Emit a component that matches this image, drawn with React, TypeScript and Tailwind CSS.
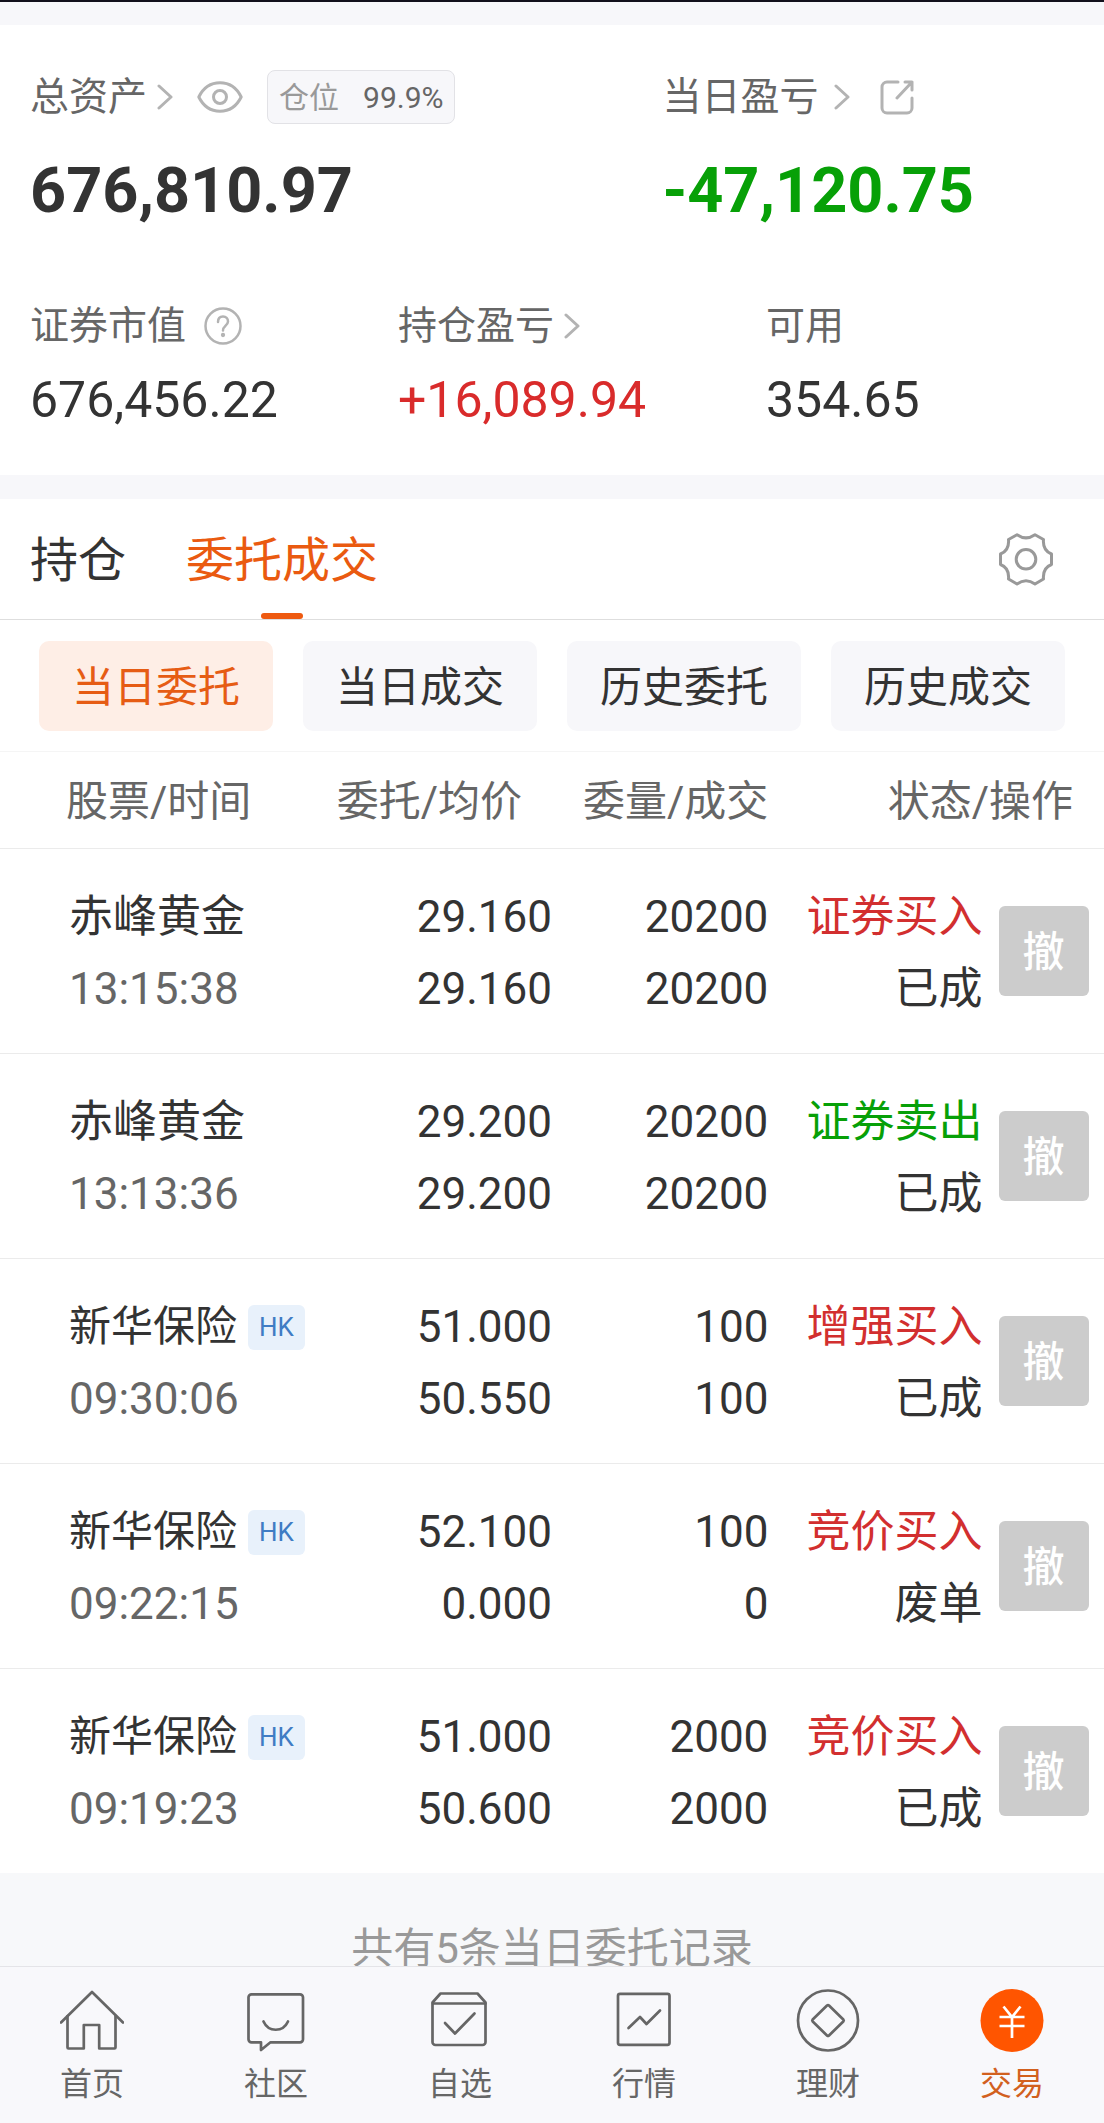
import { useState } from "react";
import type { ReactNode } from "react";
import clsx from "clsx";

type Order = {
  name: string;
  hk?: boolean;
  time: string;
  price: string;
  average: string;
  amount: string;
  filled: string;
  type: string;
  side: "buy" | "sell";
  status: string;
};

const orders: Order[] = [
  {
    name: "赤峰黄金",
    time: "13:15:38",
    price: "29.160",
    average: "29.160",
    amount: "20200",
    filled: "20200",
    type: "证券买入",
    side: "buy",
    status: "已成",
  },
  {
    name: "赤峰黄金",
    time: "13:13:36",
    price: "29.200",
    average: "29.200",
    amount: "20200",
    filled: "20200",
    type: "证券卖出",
    side: "sell",
    status: "已成",
  },
  {
    name: "新华保险",
    hk: true,
    time: "09:30:06",
    price: "51.000",
    average: "50.550",
    amount: "100",
    filled: "100",
    type: "增强买入",
    side: "buy",
    status: "已成",
  },
  {
    name: "新华保险",
    hk: true,
    time: "09:22:15",
    price: "52.100",
    average: "0.000",
    amount: "100",
    filled: "0",
    type: "竞价买入",
    side: "buy",
    status: "废单",
  },
  {
    name: "新华保险",
    hk: true,
    time: "09:19:23",
    price: "51.000",
    average: "50.600",
    amount: "2000",
    filled: "2000",
    type: "竞价买入",
    side: "buy",
    status: "已成",
  },
];

const filters = ["当日委托", "当日成交", "历史委托", "历史成交"];

function Chevron() {
  return (
    <svg width="16" height="26" viewBox="0 0 16 26" fill="none" stroke="#b3b3b3" strokeWidth="3" strokeLinecap="round" strokeLinejoin="round">
      <path d="M2 2l12 11L2 24" />
    </svg>
  );
}

function EyeIcon() {
  return (
    <svg width="46" height="32" viewBox="0 0 46 32" fill="none" stroke="#b3b3b3" strokeWidth="3" strokeLinejoin="round">
      <path d="M1.8 16C6 7.500 13.500 1.800 23 1.800S40 7.500 44.200 16C40 24.500 32.500 30.200 23 30.200S6 24.500 1.800 16z" />
      <circle cx="23" cy="16" r="6.500" />
    </svg>
  );
}

function ShareIcon() {
  return (
    <svg width="34" height="35" viewBox="0 0 34 35" fill="none" stroke="#b3b3b3" strokeWidth="3" strokeLinecap="round" strokeLinejoin="round">
      <path d="M18 2H7a5 5 0 0 0-5 5v21a5 5 0 0 0 5 5h20a5 5 0 0 0 5-5V18" />
      <path d="M25 2h7v8M32 2L17 18" />
    </svg>
  );
}

function HelpIcon() {
  return (
    <svg width="38" height="40" viewBox="0 0 38 40" fill="none" stroke="#b3b3b3" strokeWidth="2.500" strokeLinecap="round">
      <circle cx="19" cy="20" r="17.500" />
      <path d="M14 16c0-3.500 2-5.500 5-5.500s5 2 5 5c0 4-5 4.500-5 9" />
      <circle cx="19" cy="29" r="0.900" fill="#b3b3b3" />
    </svg>
  );
}

function GearIcon() {
  return (
    <svg width="54" height="53" viewBox="0 0 54 53" fill="none" stroke="#999" strokeWidth="3" strokeLinejoin="round">
      <path d="M18 1.800Q27 8 36 1.800L44.500 6.500Q43.500 17.500 52.500 21V31.500Q43.500 35 44.500 46L36 51Q27 44.500 18 51L9.500 46Q10.500 35 1.500 31.500V21Q10.500 17.500 9.500 6.500Z" />
      <circle cx="27" cy="26.300" r="9.800" />
    </svg>
  );
}

function NavIcon({ children }: { children: ReactNode }) {
  return (
    <svg width="64" height="64" viewBox="0 0 64 64" fill="none" stroke="#666" strokeWidth="2.700" strokeLinecap="round" strokeLinejoin="round">
      {children}
    </svg>
  );
}

const navItems = [
  {
    label: "首页",
    icon: (
      <NavIcon>
        <path d="M1 33.500L32 3l31 30.500" />
        <path d="M7.500 27v31.500a1 1 0 0 0 1 1h15.300V36h15.400v23.500h15.300a1 1 0 0 0 1-1V27" />
      </NavIcon>
    ),
  },
  {
    label: "社区",
    icon: (
      <NavIcon>
        <path d="M7.500 5.300h48.500a3 3 0 0 1 3 3v42a3 3 0 0 1-3 3H26.500L17 61v-7.700H7.500a3 3 0 0 1-3-3v-42a3 3 0 0 1 3-3z" />
        <path d="M19.500 32.500c5 11 19.500 11 24.500 0" />
      </NavIcon>
    ),
  },
  {
    label: "自选",
    icon: (
      <NavIcon>
        <path d="M12.500 4.500h37l8 9v39.500a3 3 0 0 1-3 3h-47a3 3 0 0 1-3-3V13.500z" />
        <path d="M5 14.500h52.500M17 34l10 10.500 19.500-20" />
      </NavIcon>
    ),
  },
  {
    label: "行情",
    icon: (
      <NavIcon>
        <rect x="6" y="4.800" width="51.500" height="51" rx="2" />
        <path d="M16.500 39L28 28l6.500 7L48 21.500" />
      </NavIcon>
    ),
  },
  {
    label: "理财",
    icon: (
      <NavIcon>
        <circle cx="32" cy="31.500" r="30" />
        <path d="M31 16.500L16.700 30.500a1.500 1.500 0 0 0 0 2L31 46.500a1.500 1.500 0 0 0 2 0L47.300 32.500a1.500 1.500 0 0 0 0-2L33 16.500a1.500 1.500 0 0 0-2 0z" />
      </NavIcon>
    ),
  },
  {
    label: "交易",
    active: true,
    icon: (
      <svg width="64" height="64" viewBox="0 0 64 64" fill="none" stroke="#fff" strokeWidth="2.700">
        <circle cx="32" cy="31.500" r="31.500" fill="#ff5500" stroke="none" />
        <path d="M23.500 17.500L32 28l8.500-10.500M32 28v21M19.500 28h25M19.500 37h25" />
      </svg>
    ),
  },
];

function Summary() {
  return (
    <section className="bg-white pt-[45px] pb-[45px] text-[#666]">
      <div className="flex">
        <div className="w-3/5 pl-[30px]">
          <div className="flex h-[54px] items-center">
            <a href="#assets" className="flex items-center gap-[10px] text-[39px] leading-[54px]">
              总资产
              <Chevron />
            </a>
            <button type="button" aria-label="隐藏金额" className="ml-6">
              <EyeIcon />
            </button>
            <div className="ml-6 flex h-[54px] items-center gap-6 rounded-[8px] border border-[#e2e2e6] bg-[#f7f7fa] px-[11px] text-[30px]">
              <span className="text-[#999]">仓位</span>
              <span>99.9%</span>
            </div>
          </div>
          <p className="mt-[35px] text-[63px] leading-[64px] font-bold text-[#333]">676,810.97</p>
        </div>
        <div className="w-2/5">
          <div className="flex h-[54px] items-center">
            <a href="#today" className="flex items-center gap-4 text-[39px] leading-[54px]">
              当日盈亏
              <Chevron />
            </a>
            <button type="button" aria-label="分享" className="ml-[30px]">
              <ShareIcon />
            </button>
          </div>
          <p className="mt-[35px] text-[63px] leading-[64px] font-bold text-[#07a007]">-47,120.75</p>
        </div>
      </div>
      <div className="mt-[83px] grid grid-cols-3 text-[39px] leading-[40px]">
        <div className="pl-[30px]">
          <div className="flex items-center gap-[18px]">
            证券市值
            <HelpIcon />
          </div>
          <p className="mt-6 text-[50px] leading-[60px] text-[#333]">676,456.22</p>
        </div>
        <div className="pl-[30px]">
          <a href="#position" className="flex items-center gap-[10px]">
            持仓盈亏
            <Chevron />
          </a>
          <p className="mt-6 text-[50px] leading-[60px] text-[#d92b2b]">+16,089.94</p>
        </div>
        <div className="pl-[30px]">
          <div>可用</div>
          <p className="mt-6 text-[50px] leading-[60px] text-[#333]">354.65</p>
        </div>
      </div>
    </section>
  );
}

function OrderRow({ order, last }: { order: Order; last: boolean }) {
  const line = !last && "border-b border-[#ebebeb]";
  const cell = clsx("pt-8 pb-7", line);
  return (
    <tr>
      <td className={clsx(cell, "pl-[69px]")}>
        <div className="flex h-[72px] items-center gap-[11px] whitespace-nowrap">
          <span className={order.hk ? "text-[42px]" : "text-[44px]"}>{order.name}</span>
          {order.hk && (
            <span className="rounded-[6px] bg-[#e8f1fb] px-[11px] text-[26px] leading-[45px] text-[#3f7cc4]">HK</span>
          )}
        </div>
        <div className="text-[#666]">{order.time}</div>
      </td>
      <td className={clsx(cell, "text-right")}>
        <div>{order.price}</div>
        <div>{order.average}</div>
      </td>
      <td className={clsx(cell, "text-right")}>
        <div>{order.amount}</div>
        <div>{order.filled}</div>
      </td>
      <td className={clsx(cell, "text-right whitespace-nowrap")}>
        <div className={order.side === "buy" ? "text-[#d22f2f]" : "text-[#07a007]"}>{order.type}</div>
        <div>{order.status}</div>
      </td>
      <td className={clsx(line, "pl-4")}>
        <button type="button" className="block h-[90px] w-[90px] rounded-[6px] bg-[#ccc] text-[42px] leading-[94px] font-medium text-white">
          撤
        </button>
      </td>
    </tr>
  );
}

export default function App() {
  const [filter, setFilter] = useState("当日委托");

  return (
    <div className="min-h-screen border-t-2 border-[#12101c] bg-[#f7f8fa] font-[Roboto,'Noto_Sans_CJK_SC',sans-serif] text-[#333]">
      <main>
        <div className="h-[23px] bg-[#f7f7fa]" />
        <Summary />
        <div className="h-6 bg-[#f7f7fa]" />

        <section className="bg-white">
          {/* Tabs */}
          <div className="flex h-[121px] items-stretch border-b border-[#dedede] pr-[51px] pl-[30px] text-[48px]">
            <button type="button" className="mr-[60px] pt-[3px]">
              持仓
            </button>
            <button type="button" className="relative pt-[3px] text-[#ea5a10]">
              委托成交
              <span className="absolute bottom-0 left-1/2 h-[6px] w-[42px] -translate-x-1/2 rounded-full bg-[#ee5a10]" />
            </button>
            <button type="button" aria-label="设置" className="ml-auto">
              <GearIcon />
            </button>
          </div>

          {/* Filters */}
          <div className="grid grid-cols-4 gap-[30px] border-b border-[#f5f5f5] px-[39px] pt-[21px] pb-5">
            {filters.map((name) => (
              <button
                key={name}
                type="button"
                onClick={() => setFilter(name)}
                className={clsx(
                  "h-[90px] rounded-[10px] pt-[3px] text-[42px]",
                  name === filter ? "bg-[#feeee6] text-[#e65c14]" : "bg-[#f7f7fa]"
                )}
              >
                {name}
              </button>
            ))}
          </div>

          {/* Orders */}
          <table className="w-full table-fixed border-separate border-spacing-0 text-[44px] leading-[72px]">
            <colgroup>
              <col className="w-[28%]" />
              <col className="w-[22%]" />
              <col className="w-[19.6%]" />
              <col className="w-[19.4%]" />
              <col className="w-[11%]" />
            </colgroup>
            <thead className="text-[42px] text-[#666]">
              <tr>
                <th className="border-b border-[#ebebeb] pt-[14px] pb-[10px] pl-[66px] text-left font-normal">股票/时间</th>
                <th className="border-b border-[#ebebeb] pt-[14px] pr-[30px] pb-[10px] text-right font-normal">委托/均价</th>
                <th className="border-b border-[#ebebeb] pt-[14px] pb-[10px] text-right font-normal">委量/成交</th>
                <th colSpan={2} className="border-b border-[#ebebeb] pt-[14px] pr-[31px] pb-[10px] text-right font-normal">
                  状态/操作
                </th>
              </tr>
            </thead>
            <tbody>
              {orders.map((order, i) => (
                <OrderRow key={order.time} order={order} last={i === orders.length - 1} />
              ))}
            </tbody>
          </table>
        </section>

        <p className="pt-[46px] text-center text-[42px] leading-[60px] text-[#999]">共有5条当日委托记录</p>
      </main>

      <nav className="fixed inset-x-0 bottom-0 grid h-[157px] grid-cols-6 border-t border-[#e4e4e8] bg-[#f8f8fb]">
        {navItems.map(({ label, icon, active }) => (
          <a
            key={label}
            href={"#" + label}
            className={clsx(
              "flex flex-col items-center gap-[11px] pt-[22px] text-[32px] leading-[40px]",
              active ? "text-[#d2601e]" : "text-[#666]"
            )}
          >
            {icon}
            {label}
          </a>
        ))}
      </nav>
    </div>
  );
}
